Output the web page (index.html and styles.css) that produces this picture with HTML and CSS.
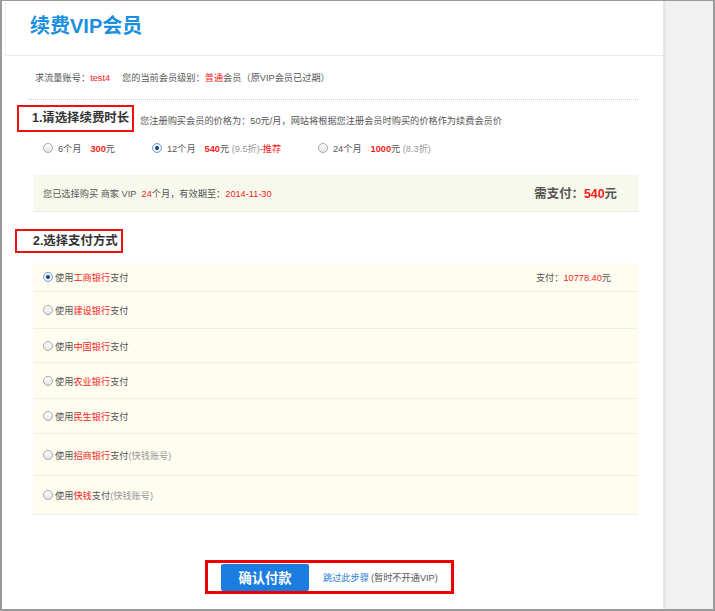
FILE: index.html
```html
<!DOCTYPE html>
<html lang="zh-CN">
<head>
<meta charset="utf-8">
<title>续费VIP会员</title>
<link rel="stylesheet" href="styles.css">
</head>
<body>
<div class="frame">
  <div class="main">
    <div class="header"><h1 class="title">续费VIP会员</h1></div>

    <div class="info">求流量账号：<span class="red">test4</span><span class="sp"></span>您的当前会员级别：<span class="red">普通</span>会员（原VIP会员已过期）</div>
    <div class="dots"></div>

    <div class="sec-row">
      <div class="sec-box sec-box--time">1.请选择续费时长</div>
      <div class="sec-desc">您注册购买会员的价格为：50元/月，网站将根据您注册会员时购买的价格作为续费会员价</div>
    </div>

    <div class="options">
      <div class="opt"><span class="radio"></span><span class="opt-label">6个月</span><span class="price"><b class="red">300</b>元</span></div>
      <div class="opt"><span class="radio radio--on"></span><span class="opt-label">12个月</span><span class="price"><b class="red">540</b>元 <span class="muted">(9.5折)</span><span class="red">-推荐</span></span></div>
      <div class="opt"><span class="radio"></span><span class="opt-label">24个月</span><span class="price"><b class="red">1000</b>元 <span class="muted">(8.3折)</span></span></div>
    </div>

    <div class="summary">
      <div class="summary-text">您已选择购买 商家 VIP&nbsp;&nbsp;<span class="red">24</span>个月，有效期至：<span class="red">2014-11-30</span></div>
      <div class="summary-total">需支付：<span class="red">540</span>元</div>
    </div>

    <div class="sec-row sec-row--pay">
      <div class="sec-box sec-box--pay">2.选择支付方式</div>
    </div>

    <div class="paylist">
      <div class="pay"><span class="radio radio--on"></span><span>使用<span class="red">工商银行</span>支付</span><span class="pay-amt">支付：<span class="red">10778.40</span>元</span></div>
      <div class="pay"><span class="radio"></span><span>使用<span class="red">建设银行</span>支付</span></div>
      <div class="pay"><span class="radio"></span><span>使用<span class="red">中国银行</span>支付</span></div>
      <div class="pay"><span class="radio"></span><span>使用<span class="red">农业银行</span>支付</span></div>
      <div class="pay"><span class="radio"></span><span>使用<span class="red">民生银行</span>支付</span></div>
      <div class="pay"><span class="radio"></span><span>使用<span class="red">招商银行</span>支付<span class="muted">(快钱账号)</span></span></div>
      <div class="pay"><span class="radio"></span><span>使用<span class="red">快钱</span>支付<span class="muted">(快钱账号)</span></span></div>
    </div>

    <div class="actions">
      <button class="confirm" type="button">确认付款</button>
      <a class="skip" href="#">跳过此步骤</a><span class="skip-note">(暂时不开通VIP)</span>
    </div>
  </div>
  <div class="side"></div>
</div>
</body>
</html>
```

FILE: styles.css
```css
* { box-sizing: border-box; }

html, body {
  margin: 0;
  padding: 0;
  background: #fff;
}

body {
  font-family: "Liberation Sans", "Noto Sans CJK SC", sans-serif;
  font-size: 9.2px;
  color: #555;
}

.frame {
  width: 715px;
  height: 611px;
  border-top: 1px solid #9a9a9a;
  border-left: 2px solid #9a9a9a;
  border-right: 2px solid #9a9a9a;
  border-bottom: 2px solid #9a9a9a;
  display: flex;
  overflow: hidden;
}

.main {
  width: 661px;
  flex: none;
  background: #fff;
  overflow: hidden;
}

.side {
  flex: 1;
  background: #f1f1f1;
  border-left: 3px solid #e6e6e6;
}

.header {
  height: 55px;
  margin-left: 3px;
  border-left: 1px solid #f0f0f0;
  border-bottom: 1px solid #ebebeb;
  padding: 13px 0 0 24px;
}

.title {
  margin: 0;
  font-size: 20px;
  line-height: 24px;
  font-weight: bold;
  color: #1b8fdf;
}

.red { color: #f41c1c; }
.muted { color: #999; }
b.red { font-weight: bold; }

.info {
  margin: 12px 0 0 33px;
  height: 20px;
  line-height: 20px;
}

.sp { display: inline-block; width: 12px; }

.dots {
  margin: 11px 0 0 26px;
  width: 610px;
  border-top: 1px dotted #d0d0d0;
}

.sec-row {
  display: flex;
  align-items: center;
  margin: 5px 0 0 15px;
}

.sec-box {
  border: 2px solid #ee1111;
  color: #333;
  font-weight: bold;
  font-size: 12.4px;
  padding: 0 3px 0 13px;
}

.sec-box--time {
  height: 27px;
  line-height: 23px;
}

.sec-row--pay {
  margin: 17px 0 0 13px;
}

.sec-box--pay {
  height: 24px;
  line-height: 20px;
  padding: 0 3px 0 16px;
}

.sec-desc {
  margin-left: 6px;
  padding-top: 3px;
}

.options {
  display: flex;
  align-items: center;
  height: 20px;
  margin: 6px 0 0 41px;
}

.opt {
  display: flex;
  align-items: center;
  white-space: nowrap;
}

.opt:nth-child(1) { width: 109px; }
.opt:nth-child(2) { width: 166px; }

.opt-label { margin-left: 5px; }
.price { margin-left: 9px; }

.radio {
  display: inline-block;
  width: 10px;
  height: 10px;
  border-radius: 50%;
  border: 1px solid #a9a9a9;
  background: linear-gradient(#fdfdfd, #e6e6e6);
  position: relative;
  flex: none;
}

.radio--on {
  border-color: #6d9fd6;
  background: #eef4fb;
}

.radio--on::after {
  content: "";
  position: absolute;
  left: 2px;
  top: 2px;
  width: 4px;
  height: 4px;
  border-radius: 50%;
  background: #1f3f78;
}

.summary {
  margin: 17px 0 0 31px;
  width: 605px;
  height: 37px;
  background: #f7f9ec;
  border-bottom: 1px solid #eceee2;
  display: flex;
  align-items: center;
  justify-content: space-between;
  padding: 0 21px 0 10px;
}

.summary-total {
  font-size: 12.4px;
  font-weight: bold;
  color: #555;
}

.paylist {
  margin: 10px 0 0 31px;
  width: 605px;
  background: #fefdf0;
}

.pay {
  display: flex;
  align-items: center;
  border-bottom: 1px solid #efeee3;
  padding: 0 27px 0 10px;
  height: 36px;
}

.pay .radio { margin-right: 2px; }

.pay:nth-child(1) { height: 29px; }
.pay:nth-child(2) { height: 37px; }
.pay:nth-child(3) { height: 34px; }
.pay:nth-child(4) { height: 36px; }
.pay:nth-child(5) { height: 35px; }
.pay:nth-child(6) { height: 42px; }
.pay:nth-child(7) { height: 39px; }

.pay-amt { margin-left: auto; }

.actions {
  display: inline-flex;
  align-items: center;
  margin: 45px 0 0 203px;
  height: 34px;
  width: 249px;
  border: 3px solid #ee0000;
  padding: 0 0 0 13px;
}

.confirm {
  width: 88px;
  height: 27px;
  border: 0;
  border-radius: 2px;
  background: #1a7ddf;
  color: #fff;
  font-family: "Liberation Sans", "Noto Sans CJK SC", sans-serif;
  font-size: 13.3px;
  font-weight: bold;
  padding: 0;
  margin-top: 1px;
}

.skip {
  margin-left: 14px;
  color: #2a7fd4;
  text-decoration: none;
}

.skip-note {
  margin-left: 2px;
  color: #555;
}
```
